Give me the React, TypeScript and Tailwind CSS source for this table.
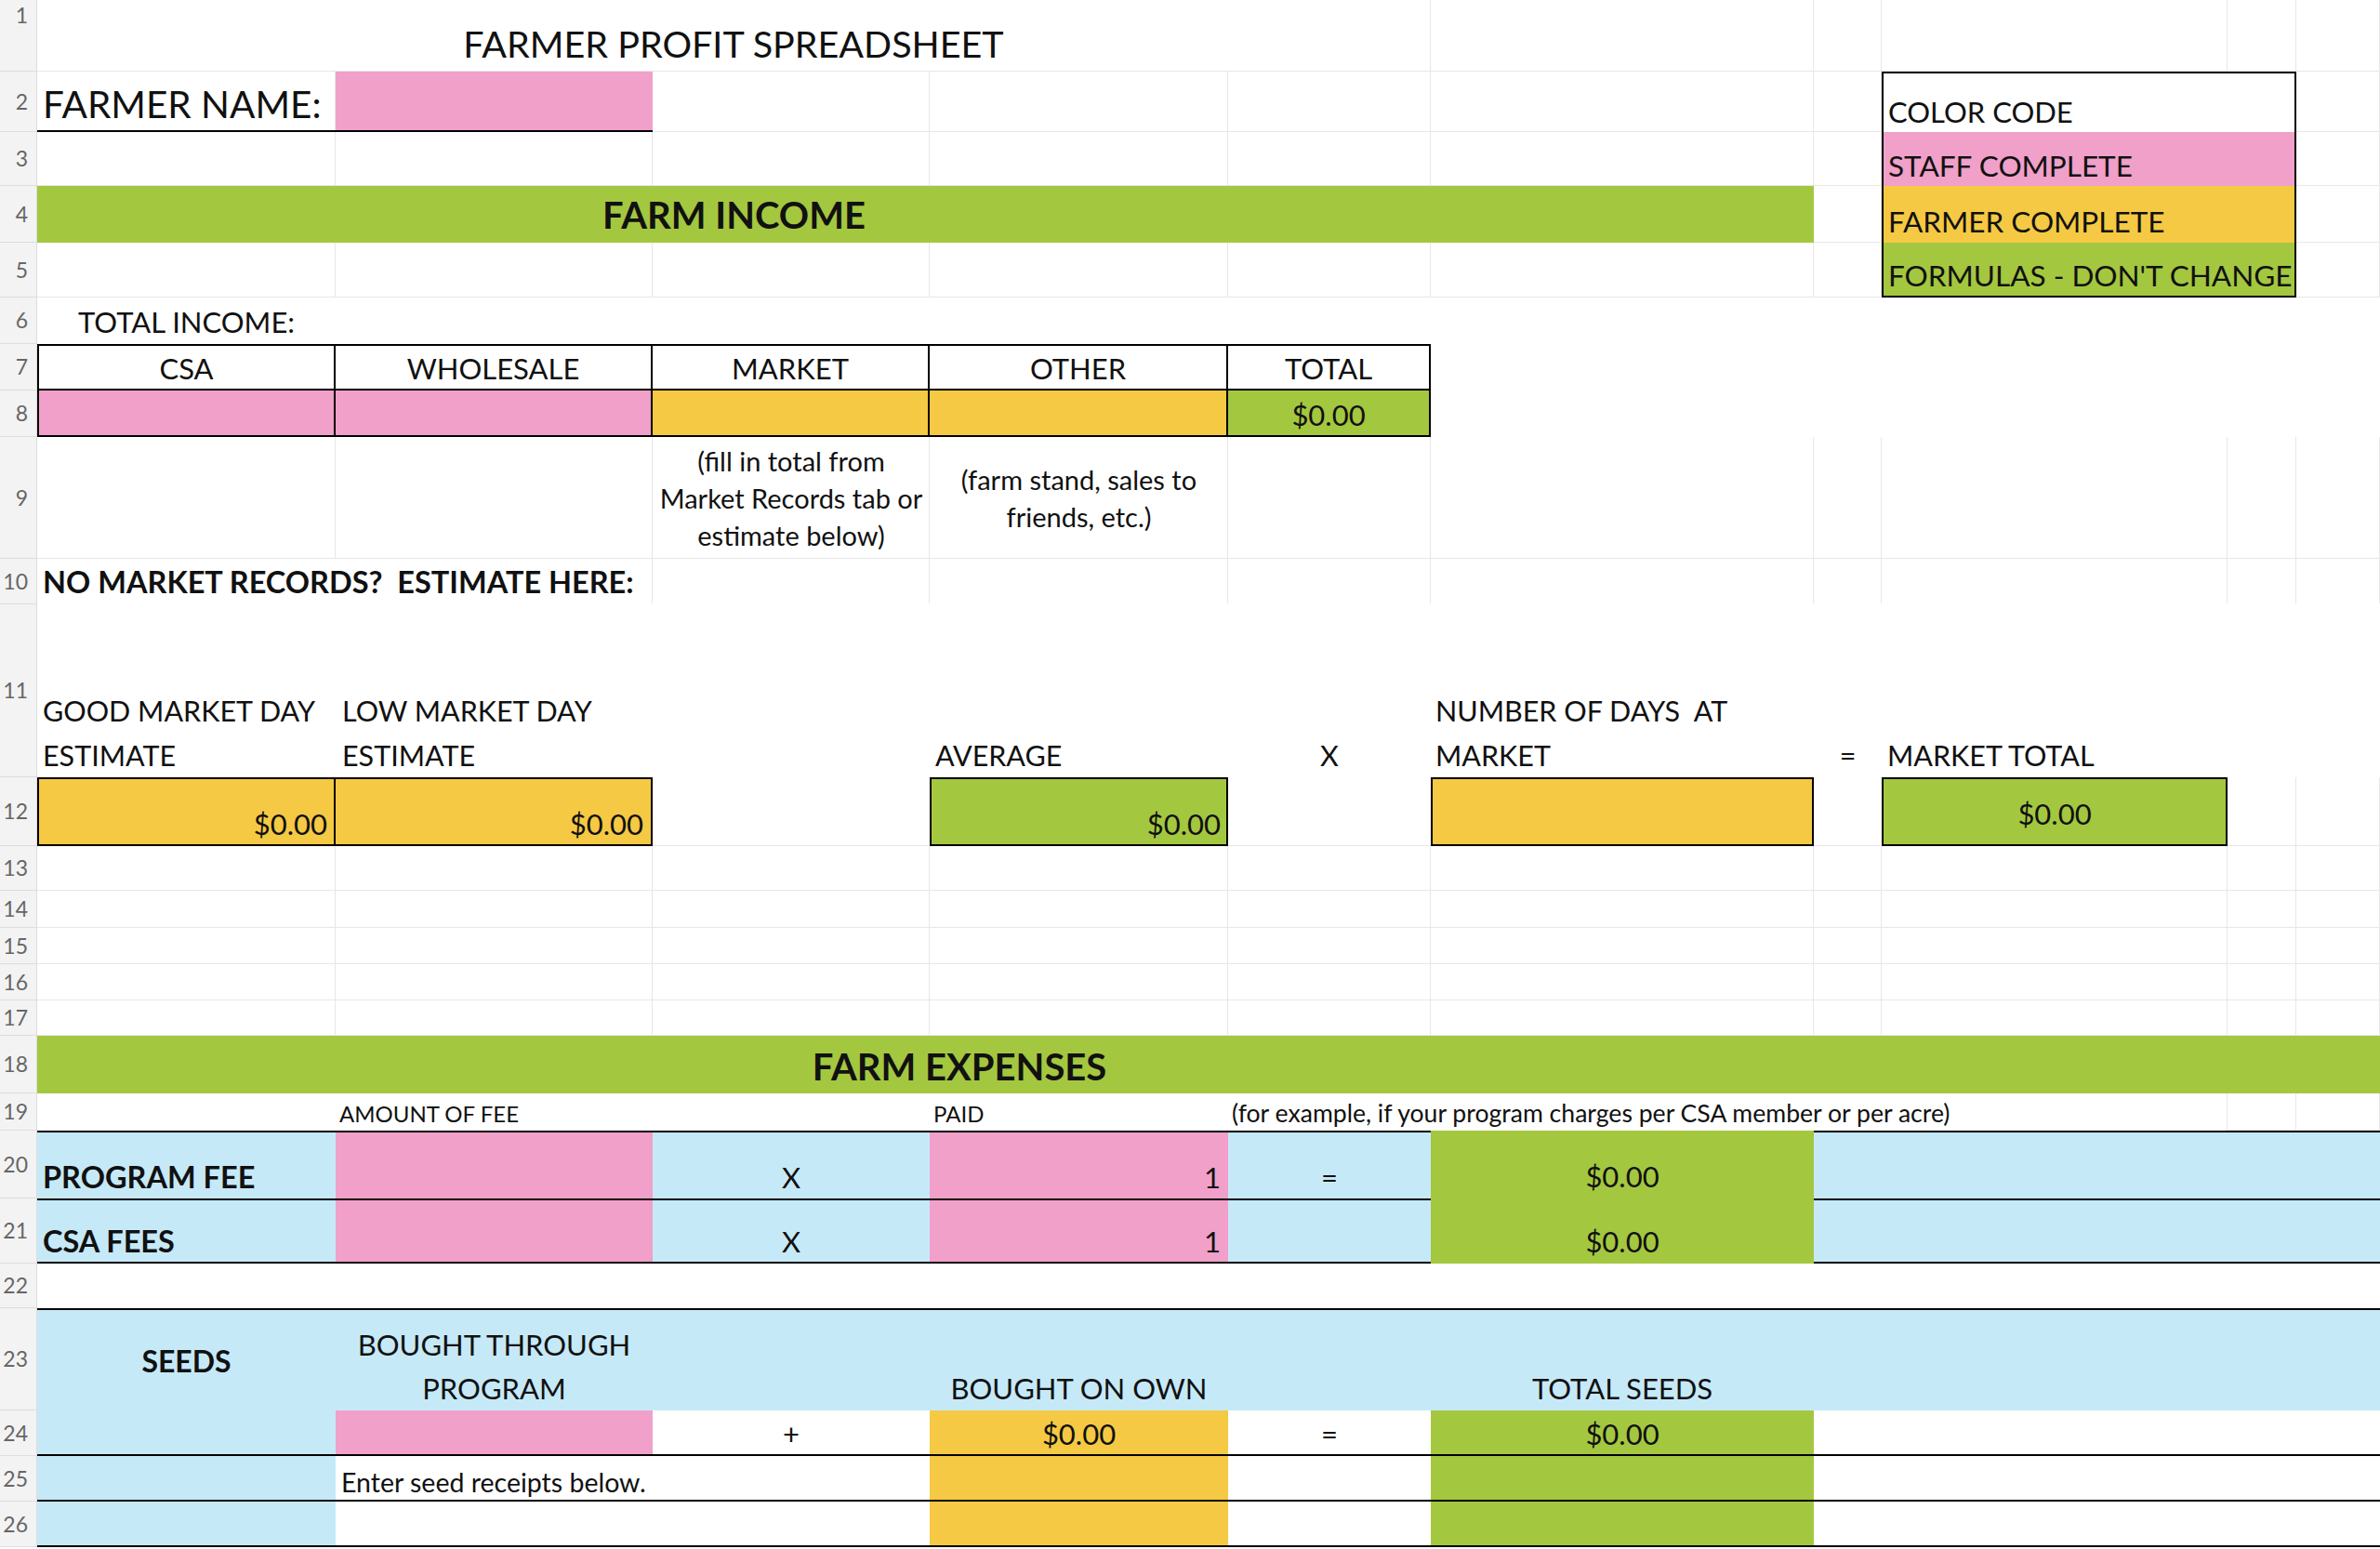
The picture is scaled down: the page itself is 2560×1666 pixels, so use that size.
import React from "react";

const COLS = "grid-cols-[40px_321px_341px_298px_321px_218px_412px_73px_372px_74px_90px]";
const ROWS =
  "grid-rows-[77px_65px_58px_61px_59px_50px_50px_50px_131px_49px_186px_74px_48px_40px_39px_39px_38px_62px_40px_73px_70px_48px_110px_49px_49px_49px]";

const PK = "bg-[#f0a0c9]";
const YL = "bg-[#f5c943]";
const GR = "bg-[#a4c740]";
const BL = "bg-[#c6e9f8]";

function Cell({ className, children }: { className: string; children?: React.ReactNode }) {
  return (
    <div className={"flex min-w-0 min-h-0 " + className}>
      {children !== undefined ? <div className="whitespace-pre">{children}</div> : null}
    </div>
  );
}

function BgGrid() {
  const cells: React.ReactNode[] = [];
  for (let r = 1; r <= 26; r++) {
    cells.push(
      <div
        key={"h" + r}
        className={
          "bg-[#f3f3f3] border-b border-r border-[#dddddd] text-[#666666] text-[23px] leading-none flex justify-end pr-[9px] " +
          (r === 1 ? "items-start pt-[5px]" : "items-center")
        }
      >
        {r}
      </div>
    );
    for (let c = 0; c < 10; c++) {
      cells.push(<div key={"c" + r + "-" + c} className="border-b border-r border-[#e7e7e7]" />);
    }
  }
  return <div className={`grid ${COLS} ${ROWS} col-start-1 row-start-1`}>{cells}</div>;
}

export default function App() {
  return (
    <div className="grid w-[2560px] h-[1666px] overflow-hidden bg-white text-[#111111] [font-family:Lato,sans-serif]">
      <BgGrid />
      <div className={`grid ${COLS} ${ROWS} col-start-1 row-start-1`}>
        {/* Row 1 */}
        <Cell className="col-start-2 col-span-5 row-start-1 bg-white border-r border-b border-[#e7e7e7] items-end justify-center pb-[10px] text-[39.5px] leading-none">
          FARMER PROFIT SPREADSHEET
        </Cell>

        {/* Row 2 */}
        <Cell className="col-start-2 row-start-2 border-b-2 border-black items-end pl-[6px] pb-[8px] text-[40.5px] leading-none">
          FARMER NAME:
        </Cell>
        <Cell className={`col-start-3 row-start-2 ${PK} border-b-2 border-black`} />

        {/* Legend */}
        <Cell className="col-start-9 col-span-2 row-start-2 bg-white border-t-2 border-x-2 border-black items-end pl-[5px] pb-[6px] text-[31px] leading-none">
          COLOR CODE
        </Cell>
        <Cell className={`col-start-9 col-span-2 row-start-3 ${PK} border-x-2 border-black items-end pl-[5px] pb-[6px] text-[31.5px] leading-none`}>
          STAFF COMPLETE
        </Cell>
        <Cell className={`col-start-9 col-span-2 row-start-4 ${YL} border-x-2 border-black items-end pl-[5px] pb-[7px] text-[31.5px] leading-none`}>
          FARMER COMPLETE
        </Cell>
        <Cell className={`col-start-9 col-span-2 row-start-5 ${GR} border-x-2 border-b-2 border-black items-end pl-[5px] pb-[6px] text-[31.5px] leading-none`}>
          FORMULAS - DON'T CHANGE
        </Cell>

        {/* Row 4 */}
        <Cell className={`col-start-2 col-span-5 row-start-4 ${GR} items-end justify-center pb-[10px] text-[40px] font-bold leading-none`}>
          FARM INCOME
        </Cell>
        <Cell className={`col-start-7 row-start-4 ${GR}`} />

        {/* Row 6 */}
        <Cell className="col-start-2 col-span-10 row-start-6 bg-white items-end pl-[44px] pb-[8px] text-[31px] leading-none">
          TOTAL INCOME:
        </Cell>
        <Cell className="col-start-7 col-span-5 row-start-7 row-span-2 bg-white" />

        {/* Row 7 */}
        <Cell className="col-start-2 row-start-7 bg-white border-2 border-black items-end justify-center pb-[6px] text-[31px] leading-none">
          CSA
        </Cell>
        <Cell className="col-start-3 row-start-7 bg-white border-t-2 border-r-2 border-b-2 border-black items-end justify-center pb-[6px] text-[31px] leading-none">
          WHOLESALE
        </Cell>
        <Cell className="col-start-4 row-start-7 bg-white border-t-2 border-r-2 border-b-2 border-black items-end justify-center pb-[6px] text-[31px] leading-none">
          MARKET
        </Cell>
        <Cell className="col-start-5 row-start-7 bg-white border-t-2 border-r-2 border-b-2 border-black items-end justify-center pb-[6px] text-[31px] leading-none">
          OTHER
        </Cell>
        <Cell className="col-start-6 row-start-7 bg-white border-t-2 border-r-2 border-b-2 border-black items-end justify-center pb-[6px] text-[31px] leading-none">
          TOTAL
        </Cell>

        {/* Row 8 */}
        <Cell className={`col-start-2 row-start-8 ${PK} border-x-2 border-b-2 border-black`} />
        <Cell className={`col-start-3 row-start-8 ${PK} border-r-2 border-b-2 border-black`} />
        <Cell className={`col-start-4 row-start-8 ${YL} border-r-2 border-b-2 border-black`} />
        <Cell className={`col-start-5 row-start-8 ${YL} border-r-2 border-b-2 border-black`} />
        <Cell className={`col-start-6 row-start-8 ${GR} border-r-2 border-b-2 border-black items-end justify-center pb-[6px] text-[31px] leading-none`}>
          $0.00
        </Cell>

        {/* Row 9 */}
        <Cell className="col-start-4 row-start-9 items-center justify-center text-center text-[29px] leading-[40px]">
          (fill in total from
          <br />
          Market Records tab or
          <br />
          estimate below)
        </Cell>
        <Cell className="col-start-5 row-start-9 items-center justify-center text-center text-[29px] leading-[40px]">
          (farm stand, sales to
          <br />
          friends, etc.)
        </Cell>

        {/* Row 10 */}
        <Cell className="col-start-2 col-span-2 row-start-10 bg-white border-r border-[#e7e7e7] items-end pl-[6px] pb-[8px] text-[32.5px] font-bold leading-none">
          {"NO MARKET RECORDS?  ESTIMATE HERE:"}
        </Cell>

        {/* Row 11 */}
        <Cell className="col-start-2 col-span-10 row-start-11 bg-white -mt-px" />
        <Cell className="col-start-2 row-start-11 items-end pl-[6px] text-[30.5px] leading-[48px]">
          GOOD MARKET DAY
          <br />
          ESTIMATE
        </Cell>
        <Cell className="col-start-3 row-start-11 items-end pl-[7px] text-[30.5px] leading-[48px]">
          LOW MARKET DAY
          <br />
          ESTIMATE
        </Cell>
        <Cell className="col-start-5 row-start-11 items-end pl-[6px] text-[30.5px] leading-[48px]">AVERAGE</Cell>
        <Cell className="col-start-6 row-start-11 items-end justify-center text-[30.5px] leading-[48px]">X</Cell>
        <Cell className="col-start-7 row-start-11 items-end pl-[5px] text-[30.5px] leading-[48px]">
          {"NUMBER OF DAYS  AT"}
          <br />
          MARKET
        </Cell>
        <Cell className="col-start-8 row-start-11 items-end justify-center text-[30.5px] leading-[48px]">=</Cell>
        <Cell className="col-start-9 row-start-11 items-end pl-[6px] text-[30.5px] leading-[48px]">MARKET TOTAL</Cell>

        {/* Row 12 */}
        <Cell className="col-start-2 col-span-9 row-start-12 bg-white border-r border-b border-[#e7e7e7]" />
        <Cell className={`col-start-2 row-start-12 ${YL} border-2 border-black items-end justify-end pr-[7px] pb-[6px] text-[31px] leading-none`}>
          $0.00
        </Cell>
        <Cell className={`col-start-3 row-start-12 ${YL} border-t-2 border-r-2 border-b-2 border-black items-end justify-end pr-[8px] pb-[6px] text-[31px] leading-none`}>
          $0.00
        </Cell>
        <Cell className={`col-start-5 row-start-12 ${GR} border-2 border-black items-end justify-end pr-[6px] pb-[6px] text-[31px] leading-none`}>
          $0.00
        </Cell>
        <Cell className={`col-start-7 row-start-12 ${YL} border-2 border-black`} />
        <Cell className={`col-start-9 row-start-12 ${GR} border-2 border-black items-center justify-center pt-[4px] text-[31px] leading-none`}>
          $0.00
        </Cell>

        {/* Row 18 */}
        <Cell className={`col-start-2 col-span-7 row-start-18 ${GR} items-end justify-center pb-[9px] text-[40px] font-bold leading-none`}>
          FARM EXPENSES
        </Cell>
        <Cell className={`col-start-9 col-span-3 row-start-18 ${GR}`} />

        {/* Row 19 */}
        <Cell className="col-start-2 col-span-8 row-start-19 bg-white border-r border-[#e7e7e7]" />
        <Cell className="col-start-3 row-start-19 items-end pl-[4px] pb-[6px] text-[24px] leading-none">AMOUNT OF FEE</Cell>
        <Cell className="col-start-5 row-start-19 items-end pl-[4px] pb-[6px] text-[24px] leading-none">PAID</Cell>
        <Cell className="col-start-6 row-start-19 items-end pl-[4px] pb-[5px] text-[26.6px] leading-none">
          (for example, if your program charges per CSA member or per acre)
        </Cell>

        {/* Row 20 */}
        <Cell className={`col-start-2 row-start-20 ${BL} border-t-2 border-black items-end pl-[6px] pb-[7px] text-[32.5px] font-bold leading-none`}>
          PROGRAM FEE
        </Cell>
        <Cell className={`col-start-3 row-start-20 ${PK} border-t-2 border-black`} />
        <Cell className={`col-start-4 row-start-20 ${BL} border-t-2 border-black items-end justify-center pb-[7px] text-[31px] leading-none`}>
          X
        </Cell>
        <Cell className={`col-start-5 row-start-20 ${PK} border-t-2 border-black items-end justify-end pr-[8px] pb-[7px] text-[31px] leading-none`}>
          1
        </Cell>
        <Cell className={`col-start-6 row-start-20 ${BL} border-t-2 border-black items-end justify-center pb-[7px] text-[31px] leading-none`}>
          =
        </Cell>
        <Cell className={`col-start-7 row-start-20 ${GR} items-end justify-center pb-[8px] text-[31px] leading-none`}>$0.00</Cell>
        <Cell className={`col-start-8 col-span-4 row-start-20 ${BL} border-t-2 border-black`} />

        {/* Row 21 */}
        <Cell className={`col-start-2 row-start-21 ${BL} border-y-2 border-black items-end pl-[6px] pb-[6px] text-[32.5px] font-bold leading-none`}>
          CSA FEES
        </Cell>
        <Cell className={`col-start-3 row-start-21 ${PK} border-y-2 border-black`} />
        <Cell className={`col-start-4 row-start-21 ${BL} border-y-2 border-black items-end justify-center pb-[6px] text-[31px] leading-none`}>
          X
        </Cell>
        <Cell className={`col-start-5 row-start-21 ${PK} border-y-2 border-black items-end justify-end pr-[8px] pb-[6px] text-[31px] leading-none`}>
          1
        </Cell>
        <Cell className={`col-start-6 row-start-21 ${BL} border-y-2 border-black`} />
        <Cell className={`col-start-7 row-start-21 ${GR} items-end justify-center pb-[8px] text-[31px] leading-none`}>$0.00</Cell>
        <Cell className={`col-start-8 col-span-4 row-start-21 ${BL} border-y-2 border-black`} />

        {/* Row 22 */}
        <Cell className="col-start-2 col-span-10 row-start-22 bg-white" />

        {/* Row 23 */}
        <Cell className={`col-start-2 col-span-10 row-start-23 ${BL} border-t-2 border-black`} />
        <Cell className="col-start-2 row-start-23 items-center justify-center pt-[4px] text-[32px] font-bold leading-none">SEEDS</Cell>
        <Cell className="col-start-3 row-start-23 items-end justify-center text-center text-[31px] leading-[47px]">
          BOUGHT THROUGH
          <br />
          PROGRAM
        </Cell>
        <Cell className="col-start-5 row-start-23 items-end justify-center text-[31px] leading-[47px]">BOUGHT ON OWN</Cell>
        <Cell className="col-start-7 row-start-23 items-end justify-center text-[31px] leading-[47px]">TOTAL SEEDS</Cell>

        {/* Row 24 */}
        <Cell className="col-start-2 col-span-10 row-start-24 bg-white border-b-2 border-black" />
        <Cell className={`col-start-2 row-start-24 ${BL} border-b-2 border-black`} />
        <Cell className={`col-start-3 row-start-24 ${PK} border-b-2 border-black`} />
        <Cell className="col-start-4 row-start-24 items-end justify-center pb-[8px] text-[31px] leading-none">+</Cell>
        <Cell className={`col-start-5 row-start-24 ${YL} border-b-2 border-black items-end justify-center pb-[6px] text-[31px] leading-none`}>
          $0.00
        </Cell>
        <Cell className="col-start-6 row-start-24 items-end justify-center pb-[8px] text-[31px] leading-none">=</Cell>
        <Cell className={`col-start-7 row-start-24 ${GR} border-b-2 border-black items-end justify-center pb-[6px] text-[31px] leading-none`}>
          $0.00
        </Cell>

        {/* Row 25 */}
        <Cell className="col-start-2 col-span-10 row-start-25 bg-white border-b-2 border-black" />
        <Cell className={`col-start-2 row-start-25 ${BL} border-b-2 border-black`} />
        <Cell className="col-start-3 row-start-25 items-end pl-[6px] pb-[7px] text-[28.5px] leading-none">Enter seed receipts below.</Cell>
        <Cell className={`col-start-5 row-start-25 ${YL} border-b-2 border-black`} />
        <Cell className={`col-start-7 row-start-25 ${GR} border-b-2 border-black`} />

        {/* Row 26 */}
        <Cell className="col-start-2 col-span-10 row-start-26 bg-white border-b-2 border-black" />
        <Cell className={`col-start-2 row-start-26 ${BL} border-b-2 border-black`} />
        <Cell className={`col-start-5 row-start-26 ${YL} border-b-2 border-black`} />
        <Cell className={`col-start-7 row-start-26 ${GR} border-b-2 border-black`} />
      </div>
    </div>
  );
}
